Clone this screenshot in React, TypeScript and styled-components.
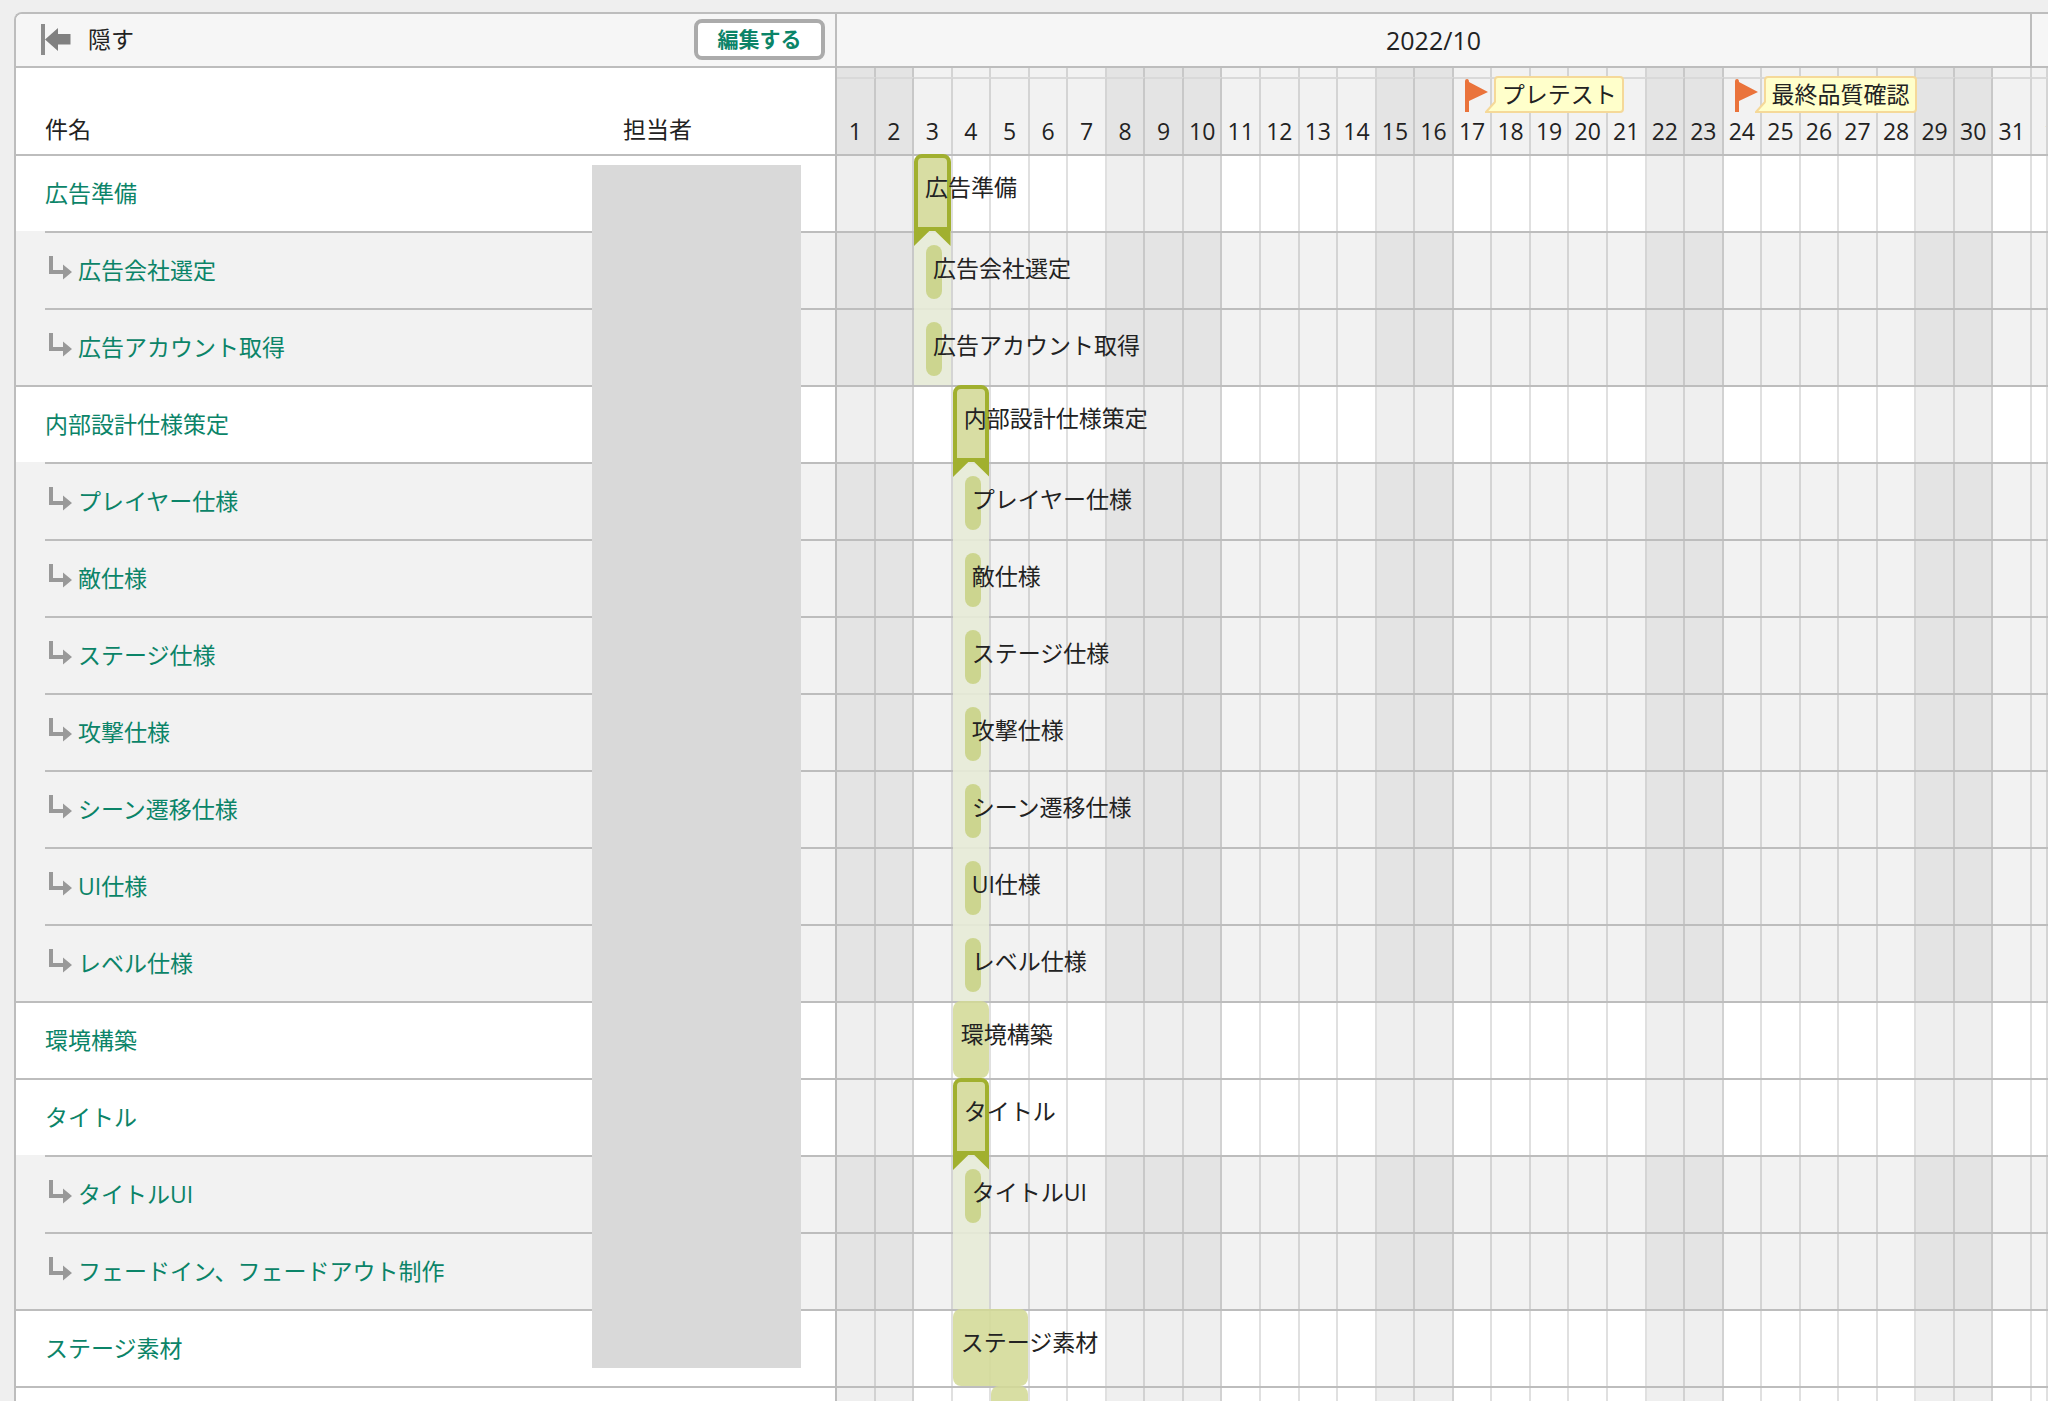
import React from 'react';
import styled, { createGlobalStyle } from 'styled-components';

type Kind = 'parent' | 'child';
type MarkType = 'folder' | 'bar' | 'pill';

interface Task {
  name: string;
  kind: Kind;
  start?: number;
  days?: number;
  mark?: MarkType;
  band?: number;
}

const tasks: Task[] = [
  { name: '広告準備', kind: 'parent', mark: 'folder', start: 3 },
  { name: '広告会社選定', kind: 'child', mark: 'pill', start: 3, band: 3 },
  { name: '広告アカウント取得', kind: 'child', mark: 'pill', start: 3, band: 3 },
  { name: '内部設計仕様策定', kind: 'parent', mark: 'folder', start: 4 },
  { name: 'プレイヤー仕様', kind: 'child', mark: 'pill', start: 4, band: 4 },
  { name: '敵仕様', kind: 'child', mark: 'pill', start: 4, band: 4 },
  { name: 'ステージ仕様', kind: 'child', mark: 'pill', start: 4, band: 4 },
  { name: '攻撃仕様', kind: 'child', mark: 'pill', start: 4, band: 4 },
  { name: 'シーン遷移仕様', kind: 'child', mark: 'pill', start: 4, band: 4 },
  { name: 'UI仕様', kind: 'child', mark: 'pill', start: 4, band: 4 },
  { name: 'レベル仕様', kind: 'child', mark: 'pill', start: 4, band: 4 },
  { name: '環境構築', kind: 'parent', mark: 'bar', start: 4 },
  { name: 'タイトル', kind: 'parent', mark: 'folder', start: 4 },
  { name: 'タイトルUI', kind: 'child', mark: 'pill', start: 4, band: 4 },
  { name: 'フェードイン、フェードアウト制作', kind: 'child', band: 4 },
  { name: 'ステージ素材', kind: 'parent', mark: 'bar', start: 4, days: 2 },
  { name: '', kind: 'parent', mark: 'bar', start: 5 },
];

const milestones = [
  { day: 17, name: 'プレテスト' },
  { day: 24, name: '最終品質確認' },
];

const holidays = [1, 2, 8, 9, 10, 15, 16, 22, 23, 29, 30];
const days = Array.from({ length: 32 }, (_, i) => i + 1);

const fontStack = '"Open Sans", "Noto Sans CJK JP", sans-serif';

const color = {
  line: '#bdbdbd',
  gridLine: 'rgba(0, 0, 0, 0.12)',
  text: '#222',
  link: '#0b8468',
  olive: '#a1b02f',
};

const GlobalStyle = createGlobalStyle`
  * { box-sizing: border-box; }
  body {
    margin: 0;
    background: #efefef;
    color: ${color.text};
    font: 23px/32px ${fontStack};
  }
`;

const Page = styled.main`
  height: 100vh;
  overflow: hidden;
  padding: 12px 0 0 14px;
`;

const Chart = styled.div`
  display: grid;
  grid-template-columns: 821px minmax(0, 1fr);
  border: 2px solid ${color.line};
  border-right: 0;
  border-bottom: 0;
  border-top-left-radius: 8px;
  overflow: hidden;
  background: #fff;
`;

const ListPane = styled.section`
  border-right: 2px solid ${color.line};
`;

const TimePane = styled.section`
  min-width: 0;
  overflow: hidden;
`;

const Toolbar = styled.div`
  display: flex;
  align-items: center;
  justify-content: space-between;
  height: 54px;
  padding: 0 10px 2px 25px;
  background: #f6f6f6;
  border-bottom: 2px solid ${color.line};
`;

const HideButton = styled.button`
  display: flex;
  align-items: center;
  gap: 17px;
  padding: 0;
  border: 0;
  background: none;
  color: inherit;
  font: inherit;
`;

const EditButton = styled.button`
  width: 131px;
  height: 41px;
  padding: 0;
  border: 4px solid #ababab;
  border-radius: 8px;
  background: #fff;
  color: ${color.link};
  font: bold 21px/32px ${fontStack};
`;

const ListHead = styled.div`
  display: grid;
  grid-template-columns: 578px 1fr;
  align-items: end;
  height: 86px;
  padding: 0 0 9px 29px;
`;

const List = styled.ul`
  position: relative;
  margin: 0;
  padding: 0;
  list-style: none;
`;

const ListRow = styled.li<{ $kind: Kind }>`
  padding-left: ${(p) => (p.$kind === 'child' ? 29 : 0)}px;
  background: ${(p) => (p.$kind === 'child' ? '#f2f2f2' : '#fff')};
`;

const ListCell = styled.div<{ $kind: Kind }>`
  display: flex;
  align-items: center;
  gap: 6px;
  height: 77px;
  padding: 0 0 2px ${(p) => (p.$kind === 'child' ? 4 : 29)}px;
  border-top: 2px solid ${color.line};
`;

const TaskLink = styled.a`
  color: ${color.link};
  text-decoration: none;
  white-space: nowrap;
`;

const AssigneeMask = styled.li`
  position: absolute;
  top: 11px;
  right: 34px;
  width: 209px;
  height: 1203px;
  background: #d9d9d9;
`;

const Grid = styled.div`
  display: grid;
  grid-template-columns: repeat(31, minmax(0, 1fr)) 16px;
`;

const MonthRow = styled(Grid)`
  height: 54px;
  background: #f6f6f6;
  border-bottom: 2px solid ${color.line};
`;

const Month = styled.div`
  grid-column: 1 / span 31;
  display: flex;
  align-items: center;
  justify-content: center;
  border-right: 2px solid ${color.line};
  font-size: 25px;
`;

const DayHead = styled(Grid)`
  height: 86px;
  grid-template-rows: 9px 1fr;
`;

const DayCap = styled.div<{ $off: boolean; $day: number }>`
  grid-row: 1;
  grid-column: ${(p) => p.$day};
  background: ${(p) => (p.$off ? '#e4e4e4' : '#f2f2f2')};
  border-right: 2px solid ${color.gridLine};
`;

const DayNumber = styled.div<{ $off: boolean; $day: number }>`
  grid-row: 2;
  grid-column: ${(p) => p.$day};
  display: flex;
  align-items: flex-end;
  justify-content: ${(p) => (p.$day > 31 ? 'flex-start' : 'center')};
  padding: 0 0 7px ${(p) => (p.$day > 31 ? 12 : 0)}px;
  overflow: hidden;
  background: ${(p) => (p.$off ? '#e4e4e4' : '#f2f2f2')};
  border-top: 2px solid #d9d9d9;
  border-right: 2px solid ${color.gridLine};
`;

const Milestone = styled.div<{ $day: number }>`
  grid-row: 1 / span 2;
  grid-column: ${(p) => p.$day} / span 5;
  z-index: 1;
  display: flex;
  align-items: flex-start;
  padding: 8px 0 0 11px;
`;

const Flag = styled.svg`
  flex: none;
  margin-top: 3px;
`;

const Bubble = styled.span`
  position: relative;
  height: 37px;
  margin-left: 6px;
  padding: 0 5px 0 6px;
  border: 2px solid #f5d999;
  border-radius: 4px;
  background: #ffffcb;
  white-space: nowrap;
`;

const BubbleTip = styled.svg`
  position: absolute;
  left: -11px;
  bottom: -2px;
`;

const DayCell = styled.div<{ $off: boolean; $kind: Kind; $day: number }>`
  grid-row: 1;
  grid-column: ${(p) => p.$day};
  background: ${(p) =>
    p.$kind === 'child' ? (p.$off ? '#e4e4e4' : '#f2f2f2') : p.$off ? '#efefef' : '#fff'};
  border-right: 2px solid ${color.gridLine};
`;

const TimeRow = styled(Grid)`
  height: 77px;
`;

const RowLine = styled.div`
  grid-row: 1;
  grid-column: 1 / -1;
  height: 2px;
  background: ${color.line};
`;

const Band = styled.div<{ $day: number }>`
  grid-row: 1;
  grid-column: ${(p) => p.$day};
  margin-right: 2px;
  background: rgba(231, 235, 215, 0.9);
`;

const Bar = styled.div<{ $start: number; $days: number }>`
  grid-row: 1;
  grid-column: ${(p) => p.$start} / span ${(p) => p.$days};
  margin-right: 2px;
  padding: 17px 0 0 8px;
  border-radius: 8px;
  background: rgba(211, 217, 150, 0.88);
  white-space: nowrap;
`;

const Folder = styled.div<{ $start: number }>`
  grid-row: 1;
  grid-column: ${(p) => p.$start};
  z-index: 1;
  display: flex;
  flex-direction: column;
  margin: 0 2px -15px 0;
`;

const FolderBody = styled.div`
  height: 77px;
  padding: 13px 0 0 7px;
  border: 4px solid ${color.olive};
  border-radius: 8px 8px 0 0;
  background: #d8dda3;
  white-space: nowrap;
`;

const Pill = styled.div<{ $start: number }>`
  grid-row: 1;
  grid-column: ${(p) => p.$start};
  width: 16px;
  height: 54px;
  margin: 14px 0 0 12px;
  border-radius: 8px;
  background: #ccd58f;
`;

const PillLabel = styled.div<{ $start: number }>`
  grid-row: 1;
  grid-column: ${(p) => p.$start} / span 10;
  padding: 21px 0 0 19px;
  white-space: nowrap;
`;

const ChildArrow = styled.svg`
  flex: none;
  margin-bottom: 4px;
`;

const HideIcon = () => (
  <svg width="30" height="31" viewBox="0 0 30 31" fill="#808080" aria-hidden="true">
    <rect width="4" height="31" fill="#8c8c8c" />
    <path d="M4 15.5 17 4v6h12.500v10.500H17V27z" />
  </svg>
);

const ChildIcon = () => (
  <ChildArrow width="23" height="24" viewBox="0 0 23 24" fill="#999" aria-hidden="true">
    <path d="M0 0h4v14h10V8.500L23 16l-9 7.500V18H0z" />
  </ChildArrow>
);

const Mark = ({ task }: { task: Task }) => {
  const start = task.start ?? 1;
  if (task.mark === 'folder')
    return (
      <Folder $start={start}>
        <FolderBody>{task.name}</FolderBody>
        <svg width="100%" height="15" viewBox="0 0 37 15" preserveAspectRatio="none" fill={color.olive}>
          <path d="M0 0H15.500L0 15zM21.500 0H37V15z" />
        </svg>
      </Folder>
    );
  if (task.mark === 'bar')
    return (
      <Bar $start={start} $days={task.days ?? 1}>
        {task.name}
      </Bar>
    );
  if (task.mark === 'pill')
    return (
      <>
        <Pill $start={start} />
        <PillLabel $start={start}>{task.name}</PillLabel>
      </>
    );
  return null;
};

const isOff = (day: number) => holidays.includes(day);

export default function App() {
  return (
    <>
      <GlobalStyle />
      <Page>
        <Chart>
          <ListPane>
            <Toolbar>
              <HideButton type="button">
                <HideIcon />
                隠す
              </HideButton>
              <EditButton type="button">編集する</EditButton>
            </Toolbar>
            <ListHead>
              <span>件名</span>
              <span>担当者</span>
            </ListHead>
            <List>
              {tasks.map((task, i) => (
                <ListRow key={i} $kind={task.kind}>
                  <ListCell $kind={task.kind}>
                    {task.kind === 'child' && <ChildIcon />}
                    {task.name && <TaskLink href="#">{task.name}</TaskLink>}
                  </ListCell>
                </ListRow>
              ))}
              <AssigneeMask aria-hidden="true" />
            </List>
          </ListPane>
          <TimePane>
            <MonthRow>
              <Month>2022/10</Month>
            </MonthRow>
            <DayHead>
              {days.map((day) => (
                <DayCap key={day} $day={day} $off={isOff(day)} />
              ))}
              {days.map((day) => (
                <DayNumber key={day} $day={day} $off={isOff(day)}>
                  {day > 31 ? day - 31 : day}
                </DayNumber>
              ))}
              {milestones.map((m) => (
                <Milestone key={m.day} $day={m.day}>
                  <Flag width="23" height="33" viewBox="0 0 23 33" fill="#ea733b">
                    <path d="M0 2Q0 0 2 0T4 3L23 13 4 22V33H0z" />
                  </Flag>
                  <Bubble>
                    {m.name}
                    <BubbleTip width="14" height="12" viewBox="0 0 14 12">
                      <path d="M11 1 1 11H14V1z" fill="#ffffcb" />
                      <path d="M10 1 1 11H14" fill="none" stroke="#f5d999" strokeWidth="2" />
                    </BubbleTip>
                  </Bubble>
                </Milestone>
              ))}
            </DayHead>
            {tasks.map((task, i) => (
              <TimeRow key={i}>
                {days.map((day) => (
                  <DayCell key={day} $day={day} $kind={task.kind} $off={isOff(day)} />
                ))}
                <RowLine />
                {task.band && <Band $day={task.band} />}
                <Mark task={task} />
              </TimeRow>
            ))}
          </TimePane>
        </Chart>
      </Page>
    </>
  );
}
